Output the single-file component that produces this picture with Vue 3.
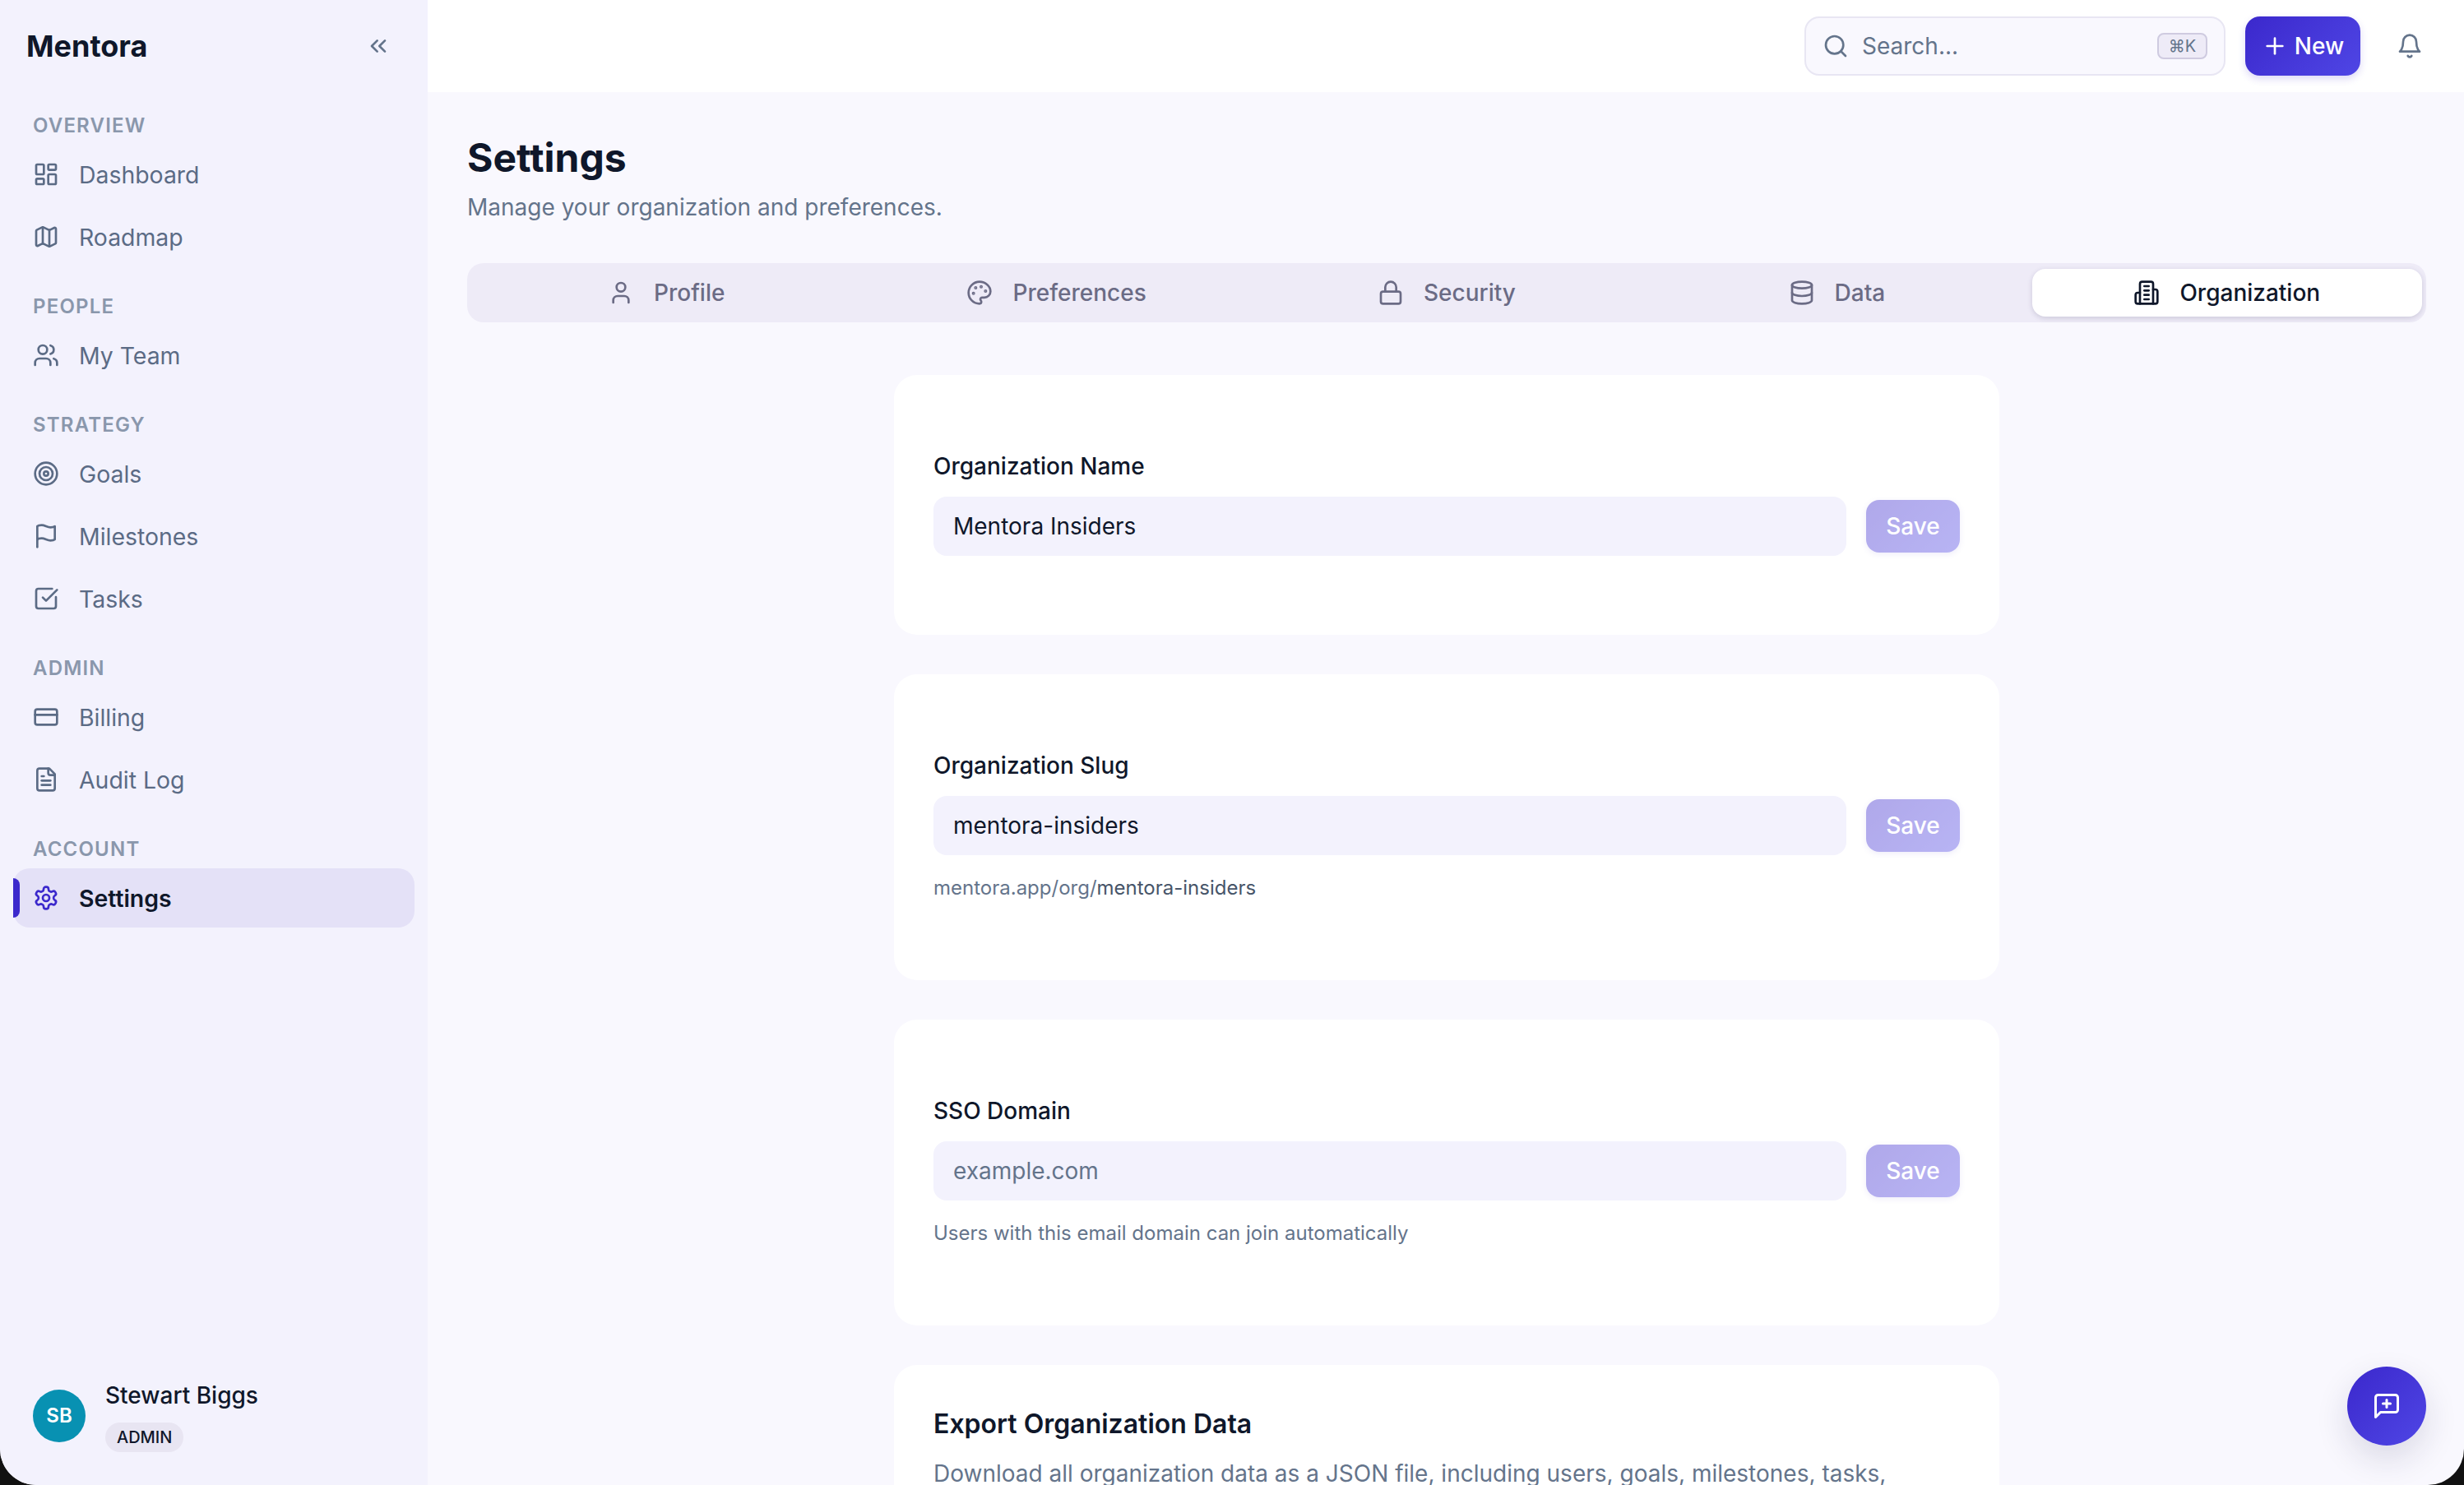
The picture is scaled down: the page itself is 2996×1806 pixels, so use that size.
<script setup>
const nav = [
  { label: 'OVERVIEW', items: [{ name: 'Dashboard', icon: 'dashboard' }, { name: 'Roadmap', icon: 'map' }] },
  { label: 'PEOPLE', items: [{ name: 'My Team', icon: 'users' }] },
  { label: 'STRATEGY', items: [{ name: 'Goals', icon: 'target' }, { name: 'Milestones', icon: 'flag' }, { name: 'Tasks', icon: 'check' }] },
  { label: 'ADMIN', items: [{ name: 'Billing', icon: 'card' }, { name: 'Audit Log', icon: 'file' }] },
  { label: 'ACCOUNT', items: [{ name: 'Settings', icon: 'settings', active: true }] },
]
const tabs = [
  { name: 'Profile', icon: 'user' },
  { name: 'Preferences', icon: 'palette' },
  { name: 'Security', icon: 'lock' },
  { name: 'Data', icon: 'database' },
  { name: 'Organization', icon: 'building', active: true },
]
const icons = {
  dashboard: '<rect width="7" height="9" x="3" y="3" rx="1"/><rect width="7" height="5" x="14" y="3" rx="1"/><rect width="7" height="9" x="14" y="12" rx="1"/><rect width="7" height="5" x="3" y="16" rx="1"/>',
  map: '<path d="M14.106 5.553a2 2 0 0 0 1.788 0l3.659-1.83A1 1 0 0 1 21 4.619v12.764a1 1 0 0 1-.553.894l-4.553 2.277a2 2 0 0 1-1.788 0l-4.212-2.106a2 2 0 0 0-1.788 0l-3.659 1.83A1 1 0 0 1 3 19.381V6.618a1 1 0 0 1 .553-.894l4.553-2.277a2 2 0 0 1 1.788 0z"/><path d="M15 5.764v15"/><path d="M9 3.236v15"/>',
  users: '<path d="M16 21v-2a4 4 0 0 0-4-4H6a4 4 0 0 0-4 4v2"/><circle cx="9" cy="7" r="4"/><path d="M22 21v-2a4 4 0 0 0-3-3.87"/><path d="M16 3.13a4 4 0 0 1 0 7.75"/>',
  target: '<circle cx="12" cy="12" r="10"/><circle cx="12" cy="12" r="6"/><circle cx="12" cy="12" r="2"/>',
  flag: '<path d="M4 15s1-1 4-1 5 2 8 2 4-1 4-1V3s-1 1-4 1-5-2-8-2-4 1-4 1z"/><line x1="4" x2="4" y1="22" y2="15"/>',
  check: '<path d="M21 10.5V19a2 2 0 0 1-2 2H5a2 2 0 0 1-2-2V5a2 2 0 0 1 2-2h12.5"/><path d="m9 11 3 3L22 4"/>',
  card: '<rect width="20" height="14" x="2" y="5" rx="2"/><line x1="2" x2="22" y1="10" y2="10"/>',
  file: '<path d="M15 2H6a2 2 0 0 0-2 2v16a2 2 0 0 0 2 2h12a2 2 0 0 0 2-2V7Z"/><path d="M14 2v4a2 2 0 0 0 2 2h4"/><path d="M10 9H8"/><path d="M16 13H8"/><path d="M16 17H8"/>',
  settings: '<path d="M12.22 2h-.44a2 2 0 0 0-2 2v.18a2 2 0 0 1-1 1.73l-.43.25a2 2 0 0 1-2 0l-.15-.08a2 2 0 0 0-2.73.73l-.22.38a2 2 0 0 0 .73 2.73l.15.1a2 2 0 0 1 1 1.72v.51a2 2 0 0 1-1 1.74l-.15.09a2 2 0 0 0-.73 2.73l.22.38a2 2 0 0 0 2.73.73l.15-.08a2 2 0 0 1 2 0l.43.25a2 2 0 0 1 1 1.73V20a2 2 0 0 0 2 2h.44a2 2 0 0 0 2-2v-.18a2 2 0 0 1 1-1.73l.43-.25a2 2 0 0 1 2 0l.15.08a2 2 0 0 0 2.73-.73l.22-.39a2 2 0 0 0-.73-2.73l-.15-.08a2 2 0 0 1-1-1.74v-.5a2 2 0 0 1 1-1.74l.15-.09a2 2 0 0 0 .73-2.73l-.22-.38a2 2 0 0 0-2.73-.73l-.15.08a2 2 0 0 1-2 0l-.43-.25a2 2 0 0 1-1-1.73V4a2 2 0 0 0-2-2z"/><circle cx="12" cy="12" r="3"/>',
  user: '<path d="M19 21v-2a4 4 0 0 0-4-4H9a4 4 0 0 0-4 4v2"/><circle cx="12" cy="7" r="4"/>',
  palette: '<circle cx="13.5" cy="6.5" r=".5" fill="currentColor"/><circle cx="17.5" cy="10.5" r=".5" fill="currentColor"/><circle cx="8.5" cy="7.5" r=".5" fill="currentColor"/><circle cx="6.5" cy="12.5" r=".5" fill="currentColor"/><path d="M12 2C6.5 2 2 6.5 2 12s4.5 10 10 10c.926 0 1.648-.746 1.648-1.688 0-.437-.18-.835-.437-1.125-.29-.289-.438-.652-.438-1.125a1.64 1.64 0 0 1 1.668-1.668h1.996c3.051 0 5.555-2.503 5.555-5.554C21.965 6.012 17.461 2 12 2z"/>',
  lock: '<rect width="18" height="11" x="3" y="11" rx="2" ry="2"/><path d="M7 11V7a5 5 0 0 1 10 0v4"/>',
  database: '<ellipse cx="12" cy="5" rx="9" ry="3"/><path d="M3 5V19A9 3 0 0 0 21 19V5"/><path d="M3 12A9 3 0 0 0 21 12"/>',
  building: '<path d="M6 22V4a2 2 0 0 1 2-2h8a2 2 0 0 1 2 2v18Z"/><path d="M6 12H4a2 2 0 0 0-2 2v6a2 2 0 0 0 2 2h2"/><path d="M18 9h2a2 2 0 0 1 2 2v9a2 2 0 0 1-2 2h-2"/><path d="M10 6h4"/><path d="M10 10h4"/><path d="M10 14h4"/><path d="M10 18h4"/>',
  chevrons: '<path d="m11 17-5-5 5-5"/><path d="m18 17-5-5 5-5"/>',
  search: '<circle cx="11" cy="11" r="8"/><path d="m21 21-4.3-4.3"/>',
  plus: '<path d="M5 12h14"/><path d="M12 5v14"/>',
  bell: '<path d="M6 8a6 6 0 0 1 12 0c0 7 3 9 3 9H3s3-2 3-9"/><path d="M10.3 21a1.94 1.94 0 0 0 3.4 0"/>',
  message: '<path d="M21 15a2 2 0 0 1-2 2H7l-4 4V5a2 2 0 0 1 2-2h14a2 2 0 0 1 2 2z"/><path d="M12 7v6"/><path d="M9 10h6"/>',
}
</script>

<template>
  <div class="app">
    <aside class="sidebar">
      <div class="brand">
        <span class="logo">Mentora</span>
        <svg class="ico" viewBox="0 0 24 24" v-html="icons.chevrons"></svg>
      </div>
      <nav class="nav">
        <section v-for="group in nav" :key="group.label" class="group">
          <div class="group-label">{{ group.label }}</div>
          <div class="group-items">
            <a v-for="item in group.items" :key="item.name" class="item" :class="{ active: item.active }">
              <span v-if="item.active" class="marker"></span>
              <svg class="ico" viewBox="0 0 24 24" v-html="icons[item.icon]"></svg>
              <span>{{ item.name }}</span>
            </a>
          </div>
        </section>
      </nav>
      <div class="me">
        <div class="avatar">SB</div>
        <div class="me-text">
          <div class="me-name">Stewart Biggs</div>
          <span class="badge">ADMIN</span>
        </div>
      </div>
    </aside>

    <div class="column">
      <header class="topbar">
        <div class="search">
          <svg class="ico" viewBox="0 0 24 24" v-html="icons.search"></svg>
          <span class="search-text">Search...</span>
          <kbd class="kbd">⌘K</kbd>
        </div>
        <button class="btn-new">
          <svg class="ico" viewBox="0 0 24 24" v-html="icons.plus"></svg>
          <span>New</span>
        </button>
        <div class="bell">
          <svg class="ico" viewBox="0 0 24 24" v-html="icons.bell"></svg>
        </div>
      </header>

      <main class="main">
        <h1 class="title">Settings</h1>
        <p class="subtitle">Manage your organization and preferences.</p>

        <div class="tabs">
          <div v-for="tab in tabs" :key="tab.name" class="tab" :class="{ active: tab.active }">
            <svg class="ico" viewBox="0 0 24 24" v-html="icons[tab.icon]"></svg>
            <span>{{ tab.name }}</span>
          </div>
        </div>

        <div class="cards">
          <section class="card">
            <label class="field-label">Organization Name</label>
            <div class="row">
              <input class="input" value="Mentora Insiders" readonly />
              <button class="save">Save</button>
            </div>
          </section>

          <section class="card">
            <label class="field-label">Organization Slug</label>
            <div class="row">
              <input class="input" value="mentora-insiders" readonly />
              <button class="save">Save</button>
            </div>
            <p class="hint">mentora.app/org/<span class="hint-strong">mentora-insiders</span></p>
          </section>

          <section class="card">
            <label class="field-label">SSO Domain</label>
            <div class="row">
              <input class="input" placeholder="example.com" readonly />
              <button class="save">Save</button>
            </div>
            <p class="hint">Users with this email domain can join automatically</p>
          </section>

          <section class="card card-export">
            <h2 class="export-title">Export Organization Data</h2>
            <p class="export-text">Download all organization data as a JSON file, including users, goals, milestones, tasks, and settings.</p>
          </section>
        </div>
      </main>
    </div>

    <button class="fab">
      <svg class="ico" viewBox="0 0 24 24" v-html="icons.message"></svg>
    </button>
  </div>
</template>

<style scoped>
.app {
  position: relative;
  display: flex;
  width: 100vw;
  height: 100vh;
  overflow: hidden;
  background: #f9f8fe;
  border-radius: 0 0 44px 44px;
  font-family: Inter, "Liberation Sans", sans-serif;
  color: #0f172a;
}
.ico {
  width: 32px;
  height: 32px;
  flex: none;
  fill: none;
  stroke: currentColor;
  stroke-width: 2;
  stroke-linecap: round;
  stroke-linejoin: round;
}
.sidebar {
  width: 520px;
  flex: none;
  display: flex;
  flex-direction: column;
  background: #f3f2fd;
}
.brand {
  height: 112px;
  flex: none;
  display: flex;
  align-items: center;
  justify-content: space-between;
  padding: 0 44px 0 32px;
  color: #64748b;
}
.logo {
  font-size: 36px;
  font-weight: 700;
  color: #0f172a;
}
.nav {
  flex: 1;
  display: flex;
  flex-direction: column;
  gap: 32px;
  padding: 24px 16px 0;
}
.group-label {
  height: 34px;
  line-height: 34px;
  margin-bottom: 6px;
  padding-left: 24px;
  font-size: 24px;
  font-weight: 600;
  letter-spacing: 1.2px;
  color: #8a97ac;
}
.group-items {
  display: flex;
  flex-direction: column;
  gap: 4px;
}
.item {
  position: relative;
  display: flex;
  align-items: center;
  gap: 24px;
  height: 72px;
  padding: 0 24px;
  border-radius: 20px;
  font-size: 28.4px;
  color: #5b6b85;
}
.item.active {
  background: #e4e1f7;
  color: #0f172a;
  font-weight: 600;
}
.item.active .ico {
  color: #3b28cc;
}
.marker {
  position: absolute;
  left: 0;
  top: 12px;
  width: 8px;
  height: 48px;
  border-radius: 0 8px 8px 0;
  background: #3b28cc;
}
.me {
  display: flex;
  align-items: center;
  gap: 24px;
  padding: 0 40px 40px;
}
.avatar {
  width: 64px;
  height: 64px;
  border-radius: 50%;
  background: #0891b2;
  color: #fff;
  font-size: 24px;
  font-weight: 600;
  display: flex;
  align-items: center;
  justify-content: center;
}
.me-name {
  font-size: 28px;
  font-weight: 500;
  line-height: 40px;
  color: #0f172a;
}
.badge {
  display: inline-flex;
  align-items: center;
  height: 36px;
  margin-top: 13px;
  padding: 0 14px;
  border-radius: 18px;
  background: #e8e5f2;
  font-size: 20px;
  font-weight: 500;
  color: #0f172a;
}
.column {
  flex: 1;
  min-width: 0;
  display: flex;
  flex-direction: column;
}
.topbar {
  height: 112px;
  flex: none;
  display: flex;
  align-items: center;
  justify-content: flex-end;
  gap: 24px;
  padding: 0 50px 0 0;
  background: #fff;
}
.search {
  box-sizing: border-box;
  width: 512px;
  height: 72px;
  display: flex;
  align-items: center;
  gap: 16px;
  padding: 0 20px;
  border: 2px solid #e8e6f3;
  border-radius: 18px;
  background: #f9f8fe;
  color: #64748b;
}
.search-text {
  flex: 1;
  font-size: 28px;
  color: #64748b;
}
.kbd {
  box-sizing: border-box;
  width: 61px;
  height: 32px;
  display: flex;
  align-items: center;
  justify-content: center;
  border: 2px solid #cfcbe0;
  border-radius: 8px;
  background: #eeebf7;
  font-family: Inter, "DejaVu Sans", sans-serif;
  font-size: 20px;
  color: #64748b;
}
.btn-new {
  width: 140px;
  height: 72px;
  display: flex;
  align-items: center;
  justify-content: center;
  gap: 8px;
  border: 0;
  border-radius: 18px;
  background: linear-gradient(135deg, #3b28cc, #4f46e5);
  box-shadow: 0 4px 10px rgba(59, 40, 204, 0.18);
  color: #fff;
  font-family: inherit;
  font-size: 28px;
  font-weight: 500;
}
.bell {
  width: 32px;
  height: 32px;
  margin-left: 20px;
  color: #64748b;
}
.main {
  flex: 1;
  min-height: 0;
  overflow: hidden;
  padding: 48px 46px 0 48px;
}
.title {
  margin: 0;
  font-size: 48px;
  line-height: 64px;
  font-weight: 700;
  color: #0f172a;
}
.subtitle {
  margin: 9px 0 0;
  font-size: 28px;
  line-height: 38px;
  color: #64748b;
}
.tabs {
  display: grid;
  grid-template-columns: repeat(5, 1fr);
  height: 72px;
  box-sizing: border-box;
  margin-top: 49px;
  padding: 7px 5px;
  border-radius: 20px;
  background: #eeebf7;
}
.tab {
  display: flex;
  align-items: center;
  justify-content: center;
  gap: 24px;
  border-radius: 16px;
  font-size: 28px;
  font-weight: 500;
  color: #6b6b85;
}
.tab.active {
  background: #fff;
  color: #0f172a;
  box-shadow: 0 2px 6px rgba(30, 27, 75, 0.16);
}
.cards {
  width: 1344px;
  margin: 64px auto 0;
  display: flex;
  flex-direction: column;
  gap: 48px;
}
.card {
  padding: 91px 48px 96px;
  border-radius: 28px;
  background: #fff;
}
.field-label {
  display: block;
  font-size: 28px;
  line-height: 40px;
  font-weight: 500;
  color: #0f172a;
}
.row {
  display: flex;
  align-items: center;
  gap: 24px;
  margin-top: 17px;
}
.input {
  flex: 1;
  min-width: 0;
  box-sizing: border-box;
  height: 72px;
  padding: 0 24px;
  border: 0;
  outline: 0;
  border-radius: 16px;
  background: #f3f2fd;
  font-family: inherit;
  font-size: 28px;
  color: #0f172a;
}
.input::placeholder {
  color: #64748b;
  opacity: 1;
}
.save {
  width: 114px;
  height: 64px;
  flex: none;
  border: 0;
  border-radius: 16px;
  background: linear-gradient(135deg, #3b28cc, #4f46e5);
  box-shadow: 0 2px 6px rgba(59, 40, 204, 0.2);
  opacity: 0.4;
  color: #fff;
  font-family: inherit;
  font-size: 28px;
  font-weight: 500;
}
.hint {
  margin: 20px 0 -4px;
  font-size: 24px;
  line-height: 40px;
  color: #64748b;
}
.hint-strong {
  color: #475569;
}
.card-export {
  padding-top: 50px;
}
.export-title {
  margin: 0;
  font-size: 32px;
  line-height: 44px;
  font-weight: 600;
  color: #0f172a;
}
.export-text {
  max-width: 1170px;
  margin: 16px 0 0;
  font-size: 28px;
  line-height: 44px;
  color: #64748b;
}
.fab {
  position: absolute;
  right: 46px;
  bottom: 48px;
  width: 96px;
  height: 96px;
  display: flex;
  align-items: center;
  justify-content: center;
  border: 0;
  border-radius: 50%;
  background: linear-gradient(135deg, #3b28cc, #4f46e5);
  box-shadow: 0 16px 40px rgba(30, 27, 75, 0.14);
  color: #fff;
}
.fab .ico {
  width: 36px;
  height: 36px;
}
</style>

<style>
html, body {
  margin: 0;
  background: #111;
  overflow: hidden;
}
</style>
